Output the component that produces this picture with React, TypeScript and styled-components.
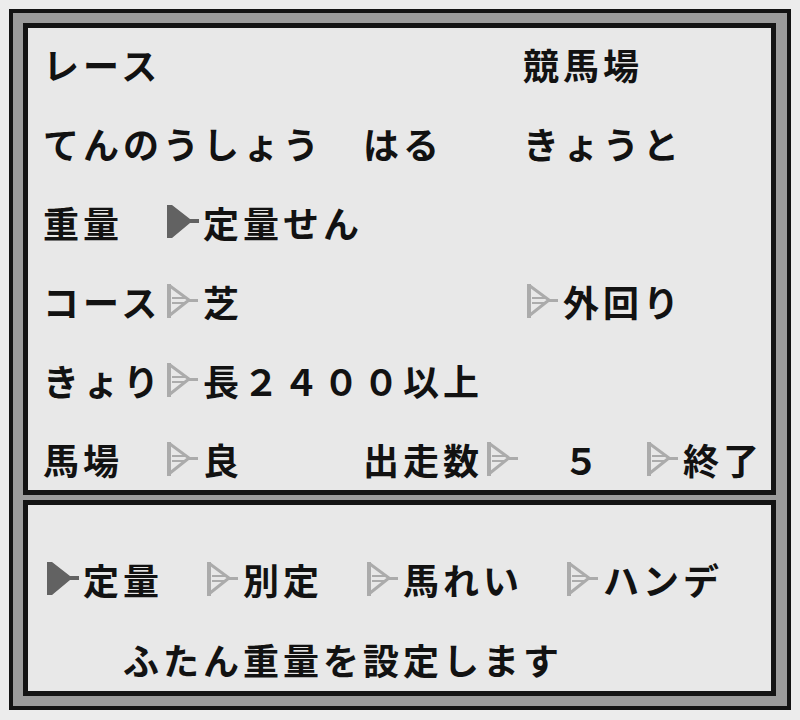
import React from "react";
import styled, { createGlobalStyle } from "styled-components";

const GlobalStyle = createGlobalStyle`
  html, body {
    margin: 0;
    padding: 0;
    background: #ececec;
  }
  body {
    font-family: "Noto Sans CJK JP", "Noto Sans", sans-serif;
  }
`;

const Screen = styled.div`
  width: 800px;
  height: 720px;
  padding: 9px;
  box-sizing: border-box;
`;

const Frame = styled.div`
  width: 782px;
  box-sizing: border-box;
  border: 4px solid #141414;
  background: #9c9c9c;
  padding: 10px 11px 10px 10px;
  display: flex;
  flex-direction: column;
  gap: 5px;
`;

const Panel = styled.div<{ $h: number; $padTop: number }>`
  height: ${(p) => p.$h}px;
  box-sizing: content-box;
  border: 5px solid #141414;
  background: #e8e8e8;
  padding: ${(p) => p.$padTop}px 0 0 15px;
  overflow: hidden;
`;

const Row = styled.div<{ $h: number }>`
  display: grid;
  grid-template-columns: repeat(18, 40px);
  height: ${(p) => p.$h}px;
  align-items: center;
`;

const Entry = styled.div<{ $col: number }>`
  grid-column-start: ${(p) => p.$col};
  display: flex;
  align-items: center;
  white-space: nowrap;
`;

const Label = styled.span`
  font-size: 36px;
  font-weight: 700;
  letter-spacing: 4px;
  line-height: 40px;
  color: #121212;
`;

const MarkerBox = styled.svg`
  width: 40px;
  height: 40px;
  flex: none;
  display: block;
`;

type Mark = "on" | "off";

function Marker({ kind }: { kind: Mark }) {
  if (kind === "on") {
    return (
      <MarkerBox viewBox="0 0 40 40">
        <path d="M4 3 H9 L27 17 H36 V21 H27 L9 36 H4 Z" fill="#626262" />
      </MarkerBox>
    );
  }
  return (
    <MarkerBox viewBox="0 0 40 40">
      <g fill="none" stroke="#ababab">
        <path d="M6 3 V37" strokeWidth="4" />
        <path d="M7 5 L26 19 L7 34" strokeWidth="3" />
        <path d="M9 17 H22 M9 22 H22" strokeWidth="2" />
        <path d="M26 19.5 H35" strokeWidth="3" />
      </g>
    </MarkerBox>
  );
}

type Item = { col: number; text?: string; mark?: Mark };

const raceRows: Item[][] = [
  [
    { col: 1, text: "レース" },
    { col: 13, text: "競馬場" },
  ],
  [
    { col: 1, text: "てんのうしょう" },
    { col: 9, text: "はる" },
    { col: 13, text: "きょうと" },
  ],
  [
    { col: 1, text: "重量" },
    { col: 4, mark: "on", text: "定量せん" },
  ],
  [
    { col: 1, text: "コース" },
    { col: 4, mark: "off", text: "芝" },
    { col: 13, mark: "off", text: "外回り" },
  ],
  [
    { col: 1, text: "きょり" },
    { col: 4, mark: "off", text: "長２４００以上" },
  ],
  [
    { col: 1, text: "馬場" },
    { col: 4, mark: "off", text: "良" },
    { col: 9, text: "出走数" },
    { col: 12, mark: "off" },
    { col: 14, text: "５" },
    { col: 16, mark: "off", text: "終了" },
  ],
];

const weightRows: Item[][] = [
  [
    { col: 1, mark: "on", text: "定量" },
    { col: 5, mark: "off", text: "別定" },
    { col: 9, mark: "off", text: "馬れい" },
    { col: 14, mark: "off", text: "ハンデ" },
  ],
  [{ col: 3, text: "ふたん重量を設定します" }],
];

function Line({ items, h }: { items: Item[]; h: number }) {
  return (
    <Row $h={h}>
      {items.map((it, i) => (
        <Entry key={i} $col={it.col}>
          {it.mark && <Marker kind={it.mark} />}
          {it.text && <Label>{it.text}</Label>}
        </Entry>
      ))}
    </Row>
  );
}

export default function App() {
  return (
    <>
      <GlobalStyle />
      <Screen>
        <Frame>
          <Panel $h={462} $padTop={0}>
            <div style={{ marginTop: -4 }}>
              {raceRows.map((r, i) => (
                <Line key={i} items={r} h={79} />
              ))}
            </div>
          </Panel>
          <Panel $h={152} $padTop={34}>
            {weightRows.map((r, i) => (
              <Line key={i} items={r} h={80} />
            ))}
          </Panel>
        </Frame>
      </Screen>
    </>
  );
}
